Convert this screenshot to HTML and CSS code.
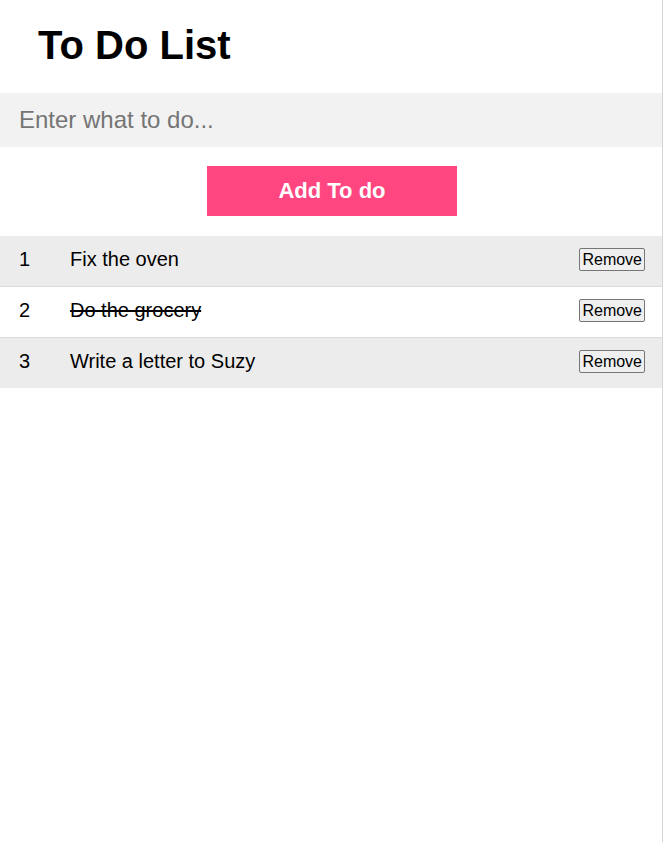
FILE: index.html
```html
<!DOCTYPE html>
<html>
<head>
<meta charset="utf-8">
<link rel="stylesheet" href="styles.css">
</head>
<body>
<div class="app">
  <h1 class="title">To Do List</h1>
  <div class="entry"><input class="entry-input" type="text" placeholder="Enter what to do..."></div>
  <div class="add-wrap"><button class="add-btn">Add To do</button></div>
  <ul class="list">
    <li class="item shade"><span class="num">1</span><span class="text">Fix the oven</span><button class="remove">Remove</button></li>
    <li class="item"><span class="num">2</span><span class="text done">Do the grocery</span><button class="remove">Remove</button></li>
    <li class="item shade"><span class="num">3</span><span class="text">Write a letter to Suzy</span><button class="remove">Remove</button></li>
  </ul>
</div>
</body>
</html>
```
FILE: styles.css
```css
html, body { margin: 0; padding: 0; background: #fff; }
body { font-family: "Liberation Sans", Arial, sans-serif; color: #000; }
.app {
  width: 662px;
  min-height: 842px;
  border-right: 1px solid #d4d4d4;
  box-sizing: content-box;
}
.title {
  margin: 0;
  padding: 23px 0 0 38px;
  height: 93px;
  box-sizing: border-box;
  font-size: 40px;
  font-weight: bold;
  line-height: 44px;
}
.entry { background: #f2f2f2; height: 54px; display: flex; align-items: center; }
.entry-input {
  border: none;
  background: transparent;
  outline: none;
  width: 100%;
  padding: 0 0 0 19px;
  font-family: "Liberation Sans", Arial, sans-serif;
  font-size: 24px;
  color: #000;
}
.entry-input::placeholder { color: #757575; }
.add-wrap { display: flex; justify-content: center; padding: 19px 0 20px 2px; }
.add-btn {
  width: 250px;
  height: 50px;
  border: none;
  background: #ff4681;
  color: #fff;
  font-family: "Liberation Sans", Arial, sans-serif;
  font-size: 22px;
  font-weight: bold;
  margin: 0;
  padding: 0;
}
.list { list-style: none; margin: 0; padding: 0; }
.item {
  display: flex;
  align-items: center;
  height: 47px;
  padding-bottom: 3px;
  border-bottom: 1px solid #dcdcdc;
  font-size: 20px;
}
.item:last-child { border-bottom: none; }
.item.shade { background: #ececec; }
.num { width: 51px; padding-left: 19px; }
.text { flex: 1; }
.done { text-decoration: line-through; }
.remove {
  margin-right: 17px;
  font-family: "Liberation Sans", Arial, sans-serif;
  font-size: 16px;
  padding: 1px 2px;
  height: 23px;
  background: #efefef;
  border: 1px solid #767676;
  border-radius: 2px;
  color: #000;
}
```
